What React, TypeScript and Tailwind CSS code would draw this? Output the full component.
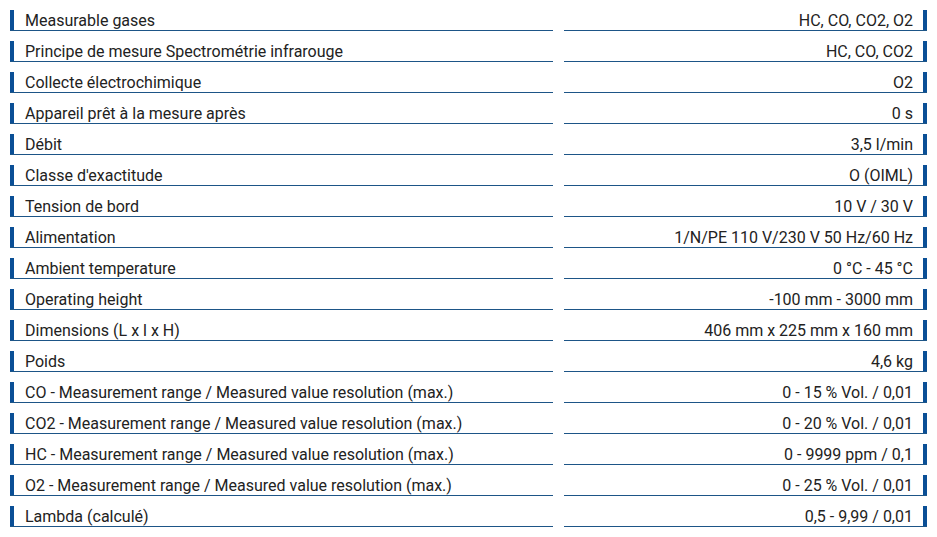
import React from "react";

const rows: [string, string][] = [
  ["Measurable gases", "HC, CO, CO2, O2"],
  ["Principe de mesure Spectrométrie infrarouge", "HC, CO, CO2"],
  ["Collecte électrochimique", "O2"],
  ["Appareil prêt à la mesure après", "0 s"],
  ["Débit", "3,5 l/min"],
  ["Classe d'exactitude", "O (OIML)"],
  ["Tension de bord", "10 V / 30 V"],
  ["Alimentation", "1/N/PE 110 V/230 V 50 Hz/60 Hz"],
  ["Ambient temperature", "0 °C - 45 °C"],
  ["Operating height", "-100 mm - 3000 mm"],
  ["Dimensions (L x l x H)", "406 mm x 225 mm x 160 mm"],
  ["Poids", "4,6 kg"],
  ["CO - Measurement range / Measured value resolution (max.)", "0 - 15 % Vol. / 0,01"],
  ["CO2 - Measurement range / Measured value resolution (max.)", "0 - 20 % Vol. / 0,01"],
  ["HC - Measurement range / Measured value resolution (max.)", "0 - 9999 ppm / 0,1"],
  ["O2 - Measurement range / Measured value resolution (max.)", "0 - 25 % Vol. / 0,01"],
  ["Lambda (calculé)", "0,5 - 9,99 / 0,01"],
];

export default function App() {
  return (
    <div
      className="w-[937px] h-[537px] bg-white pt-[10px] pl-[10px] text-[#222] text-[16px]"
      style={{ fontFamily: "Roboto, 'Liberation Sans', sans-serif" }}
    >
      {rows.map(([k, v], i) => (
        <div key={i} className="flex gap-[11px] mb-[10px]">
          <div className="w-[543px] h-[21px] flex items-stretch border-b border-[#1d5587]">
            <div className="w-[4px] bg-[#0a4f96]" />
            <div className="pl-[11px] flex items-center leading-none pt-[1px]">{k}</div>
          </div>
          <div className="w-[363px] h-[21px] flex items-stretch justify-end border-b border-[#1d5587]">
            <div className="pr-[10px] flex items-center leading-none pt-[1px]">{v}</div>
            <div className="w-[4px] bg-[#0a4f96]" />
          </div>
        </div>
      ))}
    </div>
  );
}
